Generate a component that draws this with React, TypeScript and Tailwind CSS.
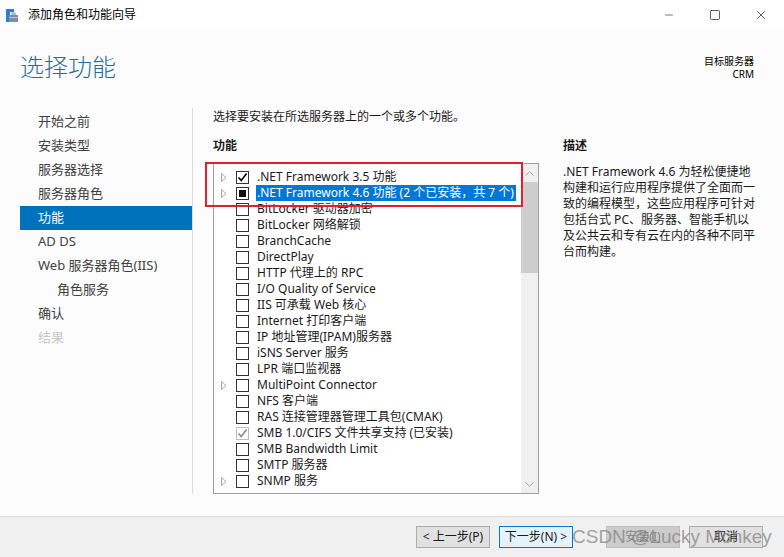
import { Minus, Square, X } from 'lucide-react'

type Feature = {
  label: string
  expandable?: boolean
  state?: 'checked' | 'partial' | 'installed'
  selected?: boolean
}

const steps = [
  { label: '开始之前' },
  { label: '安装类型' },
  { label: '服务器选择' },
  { label: '服务器角色' },
  { label: '功能', active: true },
  { label: 'AD DS' },
  { label: 'Web 服务器角色(IIS)' },
  { label: '角色服务', indent: true },
  { label: '确认' },
  { label: '结果', disabled: true },
]

const features: Feature[] = [
  { label: '.NET Framework 3.5 功能', expandable: true, state: 'checked' },
  { label: '.NET Framework 4.6 功能 (2 个已安装，共 7 个)', expandable: true, state: 'partial', selected: true },
  { label: 'BitLocker 驱动器加密' },
  { label: 'BitLocker 网络解锁' },
  { label: 'BranchCache' },
  { label: 'DirectPlay' },
  { label: 'HTTP 代理上的 RPC' },
  { label: 'I/O Quality of Service' },
  { label: 'IIS 可承载 Web 核心' },
  { label: 'Internet 打印客户端' },
  { label: 'IP 地址管理(IPAM)服务器' },
  { label: 'iSNS Server 服务' },
  { label: 'LPR 端口监视器' },
  { label: 'MultiPoint Connector', expandable: true },
  { label: 'NFS 客户端' },
  { label: 'RAS 连接管理器管理工具包(CMAK)' },
  { label: 'SMB 1.0/CIFS 文件共享支持 (已安装)', state: 'installed' },
  { label: 'SMB Bandwidth Limit' },
  { label: 'SMTP 服务器' },
  { label: 'SNMP 服务', expandable: true },
]

const description = [
  '.NET Framework 4.6 为轻松便捷地',
  '构建和运行应用程序提供了全面而一',
  '致的编程模型，这些应用程序可针对',
  '包括台式 PC、服务器、智能手机以',
  '及公共云和专有云在内的各种不同平',
  '台而构建。',
]

function AppIcon() {
  return (
    <svg width="12" height="14" viewBox="0 0 12 14">
      <rect x="0" y="0" width="4" height="13" fill="#2b7cd3" />
      <rect x="4" y="0" width="4" height="3" fill="#2b7cd3" />
      <rect x="3" y="6" width="9" height="7" fill="#7a8fa3" />
      <rect x="6" y="4" width="3" height="2" fill="none" stroke="#7a8fa3" strokeWidth="1" />
      <rect x="3" y="8" width="9" height="1" fill="#b8c6d3" />
    </svg>
  )
}

function Arrow() {
  return (
    <svg width="6" height="9" viewBox="0 0 6 9">
      <path d="M0.5 0.5 L5 4.5 L0.5 8.5 Z" fill="none" stroke="#a6a6a6" strokeWidth="1" />
    </svg>
  )
}

function CheckBox({ state }: { state?: Feature['state'] }) {
  const disabled = state === 'installed'
  return (
    <div
      className={`w-[13px] h-[13px] border flex items-center justify-center bg-white ${disabled ? 'border-[#bcbcbc]' : 'border-[#333333]'}`}
    >
      {(state === 'checked' || state === 'installed') && (
        <svg width="11" height="11" viewBox="0 0 11 11">
          <path d="M1.5 5.5 L4.2 8.4 L9.6 1.6" fill="none" stroke={disabled ? '#8a8a8a' : '#000'} strokeWidth="1.6" />
        </svg>
      )}
      {state === 'partial' && <div className="w-[7px] h-[7px] bg-[#111]" />}
    </div>
  )
}

function FeatureRow({ f }: { f: Feature }) {
  return (
    <div className="h-4 flex items-center">
      <div className="w-[17px] pl-[7px] flex items-center">{f.expandable && <Arrow />}</div>
      <div className="ml-[5px]">
        <CheckBox state={f.state} />
      </div>
      <span
        className={`ml-[7px] pl-px pr-[2px] leading-4 whitespace-nowrap ${f.selected ? 'bg-[#0078d7] text-white' : 'text-[#1a1a1a]'}`}
      >
        {f.label}
      </span>
    </div>
  )
}

function Btn({ children, primary, disabled }: { children: React.ReactNode; primary?: boolean; disabled?: boolean }) {
  return (
    <button
      className={`w-[74px] h-[22px] text-[12px] leading-none border ${
        primary
          ? 'border-[#0078d7] bg-[#e5f1fb] text-[#1a1a1a]'
          : disabled
            ? 'border-[#bfbfbf] bg-[#cccccc] text-[#838383]'
            : 'border-[#adadad] bg-[#e1e1e1] text-[#1a1a1a]'
      }`}
    >
      {children}
    </button>
  )
}

export default function App() {
  return (
    <div className="w-[784px] h-[557px] bg-white flex flex-col relative overflow-hidden font-['Noto_Sans','Noto_Sans_CJK_SC',sans-serif] text-[12px] text-[#1a1a1a]">
      {/* title bar */}
      <div className="h-[30px] flex items-center shrink-0">
        <div className="pl-[6px] pt-[2px]">
          <AppIcon />
        </div>
        <span className="ml-[10px] text-[12px] text-black">添加角色和功能向导</span>
        <div className="ml-auto flex items-center h-full">
          <div className="w-[46px] h-full flex items-center justify-center">
            <Minus className="w-[12px] h-[12px]" strokeWidth={1.2} />
          </div>
          <div className="w-[46px] h-full flex items-center justify-center">
            <Square className="w-[12px] h-[12px]" strokeWidth={1.4} />
          </div>
          <div className="w-[46px] h-full flex items-center justify-center">
            <X className="w-[14px] h-[14px]" strokeWidth={1.2} />
          </div>
        </div>
      </div>

      {/* header */}
      <div className="h-[78px] shrink-0 bg-[#fcfcfc] flex justify-between px-5 pt-[22px]">
        <h1 className="text-[24px] leading-[30px] text-[#1f6e9c] font-light">选择功能</h1>
        <div className="text-right text-[10px] leading-[13px] pt-[3px] pr-[10px] text-black">
          <div>目标服务器</div>
          <div>CRM</div>
        </div>
      </div>

      {/* body */}
      <div className="flex-1 flex bg-[#fcfcfc] pb-[22px]">
        <nav className="w-[173px] ml-5 border-r border-[#d9d9d9] pt-[2px]">
          {steps.map(s => (
            <div
              key={s.label}
              className={`h-6 flex items-center text-[13px] ${s.indent ? 'pl-[37px]' : 'pl-[18px]'} ${
                s.active ? 'bg-[#0072bc] text-white' : s.disabled ? 'text-[#c8c8c8]' : 'text-[#404040]'
              }`}
            >
              {s.label}
            </div>
          ))}
        </nav>

        <main className="flex-1 flex pl-5 pt-px">
          <div className="w-[326px]">
            <p className="h-[16px] leading-4">选择要安装在所选服务器上的一个或多个功能。</p>
            <h2 className="mt-[13px] font-bold leading-4">功能</h2>
            <div className="mt-[9px] h-[331px] border border-[#a0a0a0] bg-white flex relative">
              <div className="flex-1 pt-[5px]">
                {features.map(f => (
                  <FeatureRow key={f.label} f={f} />
                ))}
              </div>
              <div className="w-[17px] bg-[#f0f0f0] flex flex-col">
                <div className="h-[18px] flex items-center justify-center">
                  <svg width="9" height="5" viewBox="0 0 9 5">
                    <path d="M0.5 4.5 L4.5 0.8 L8.5 4.5" fill="none" stroke="#a3a3a3" strokeWidth="1" />
                  </svg>
                </div>
                <div className="h-[91px] bg-[#cdcdcd]" />
                <div className="flex-1" />
                <div className="h-[18px] flex items-center justify-center">
                  <svg width="9" height="5" viewBox="0 0 9 5">
                    <path d="M0.5 0.5 L4.5 4.2 L8.5 0.5" fill="none" stroke="#a3a3a3" strokeWidth="1" />
                  </svg>
                </div>
              </div>
              <div className="absolute left-[-9px] top-[-2px] w-[318px] h-[45px] border-2 border-[#e0202a]" />
            </div>
          </div>

          <aside className="ml-[24px] flex-1">
            <h2 className="mt-[29px] font-bold leading-4">描述</h2>
            <div className="mt-[10px] leading-4 text-[#1a1a1a] whitespace-nowrap">
              {description.map(line => (
                <div key={line}>{line}</div>
              ))}
            </div>
          </aside>
        </main>
      </div>

      {/* footer */}
      <div className="h-[42px] shrink-0 bg-[#f0f0f0] border-t border-[#dfdfdf] flex items-center justify-end gap-[9px] pr-[21px] pb-px">
        <Btn>&lt; 上一步(P)</Btn>
        <Btn primary>下一步(N) &gt;</Btn>
        <div className="w-[15px]" />
        <Btn disabled>安装(I)</Btn>
        <Btn>取消</Btn>
      </div>

      <div className="absolute left-[572px] top-[525px] whitespace-nowrap text-[19px] leading-6 text-[#7d7d7d]/70 font-['Liberation_Sans',sans-serif] pointer-events-none">
        CSDN @Lucky Monkey
      </div>
    </div>
  )
}
